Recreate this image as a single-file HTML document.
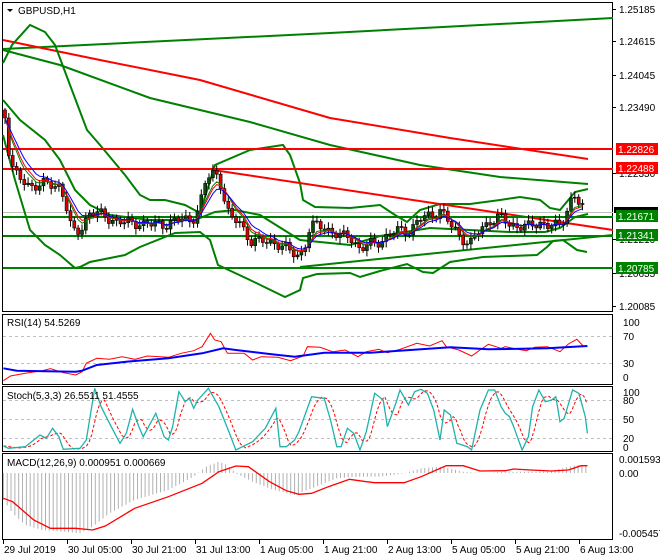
<!DOCTYPE html>
<html><head><meta charset="utf-8"><style>
html,body{margin:0;padding:0;background:#fff;width:660px;height:560px;overflow:hidden}
svg{display:block}
text{font-family:"Liberation Sans",sans-serif;font-size:10px;fill:#000}
</style></head><body>
<svg id="s" width="660" height="560" xmlns="http://www.w3.org/2000/svg"></svg>
<script>
var S=document.getElementById('s'),o='';
function pl(p,c,w,extra){o+='<polyline fill="none" stroke="'+c+'" stroke-width="'+w+'" '+(extra||'')+' points="'+p.map(function(q){return q[0].toFixed(1)+','+q[1].toFixed(1)}).join(' ')+'"/>';}
function ln(x1,y1,x2,y2,c,w,e){o+='<line x1="'+x1+'" y1="'+y1+'" x2="'+x2+'" y2="'+y2+'" stroke="'+c+'" stroke-width="'+w+'" '+(e||'')+'/>';}
function tx(x,y,t,c){o+='<text x="'+x+'" y="'+y+'"'+(c?' style="fill:'+c+'"':'')+'>'+t+'</text>';}
function Z(a){return a.map(function(q){return [q[0]/2.375,q[1]/3+300]});}
function interp(pts,x){for(var i=0;i<pts.length-1;i++){if(x>=pts[i][0]&&x<=pts[i+1][0]){var t=(x-pts[i][0])/(pts[i+1][0]-pts[i][0]);return pts[i][1]+t*(pts[i+1][1]-pts[i][1]);}}return x<pts[0][0]?pts[0][1]:pts[pts.length-1][1];}
o+='<rect x="2.5" y="2.5" width="610" height="309" fill="none" stroke="#000"/>';
o+='<rect x="2.5" y="314.5" width="610" height="70" fill="none" stroke="#000"/>';
o+='<rect x="2.5" y="386.5" width="610" height="65" fill="none" stroke="#000"/>';
o+='<rect x="2.5" y="453.5" width="610" height="86" fill="none" stroke="#000"/>';
ln(3,212.5,613,212.5,'#c0c0c0',1);
pl([[3,49],[330,33],[613,18]],'#008000',2);
pl([[3,40],[100,60],[200,80],[330,118],[450,138],[588,159]],'#ff0000',2);
pl([[3,50],[60,65],[150,98],[250,122],[330,145],[420,165],[500,177],[588,184]],'#008000',2);
pl([[3,63],[12,45],[30,25],[45,32],[55,45],[70,85],[87,130],[100,145],[125,175],[140,195],[150,200],[165,200],[185,205],[200,213],[215,165],[250,150],[283,145],[290,155],[300,183],[303,200],[315,207],[350,208],[380,205],[395,215],[407,222],[420,210],[440,204],[470,204],[500,200],[520,197],[540,200],[550,208],[560,210],[575,192],[588,189]],'#008000',2);
pl([[3,135],[15,180],[30,230],[45,245],[60,255],[75,268],[80,267],[90,262],[110,258],[125,255],[140,247],[175,233],[200,232],[210,240],[218,265],[250,280],[285,297],[300,290],[303,278],[317,274],[350,273],[360,277],[380,271],[407,264],[423,272],[433,273],[450,262],[483,257],[537,255],[547,247],[553,241],[563,240],[577,250],[587,252]],'#008000',2);
pl([[3,100],[20,120],[45,140],[60,160],[75,190],[90,205],[110,215],[150,220],[195,220],[215,212],[235,210],[260,215],[300,240],[350,245],[380,236],[430,228],[470,230],[510,232],[545,232],[560,228],[575,217],[588,214]],'#008000',2);
pl([[213,170],[613,230]],'#ff0000',2);
pl([[300,267],[613,235]],'#008000',2);
ln(3,149,613,149,'#ff0000',2);ln(3,169,613,169,'#ff0000',2);
ln(3,217,613,217,'#008000',2);ln(3,236,613,236,'#008000',2);ln(3,268,613,268,'#008000',2);
var P=[[5,115],[10,160],[15,175],[20,180],[30,185],[40,185],[60,185],[65,200],[70,225],[75,235],[80,230],[85,220],[90,212],[100,215],[110,218],[120,222],[130,224],[140,222],[150,225],[160,225],[170,222],[180,220],[190,220],[195,215],[200,205],[205,185],[210,175],[215,172],[220,180],[225,200],[230,220],[240,222],[250,240],[260,243],[270,240],[280,245],[290,252],[300,255],[305,245],[310,228],[320,225],[330,230],[340,238],[350,235],[360,250],[370,245],[380,240],[390,235],[400,230],[410,230],[420,220],[430,215],[440,210],[450,225],[460,235],[470,245],[480,230],[490,220],[500,218],[510,225],[520,225],[530,228],[540,222],[550,225],[560,228],[565,215],[570,200],[575,195],[580,205],[585,212]];
var cl=[],xs=[],prev=110;
for(var x=5,i=0;x<=586;x+=3.85,i++){var c=interp(P,x)+Math.sin(i*1.7)*4+Math.cos(i*0.9)*3;xs.push(x);cl.push(c);
 var op=prev,hi=Math.min(op,c)-2-Math.abs(Math.sin(i*2.3))*4,lo=Math.max(op,c)+2+Math.abs(Math.cos(i*1.3))*4;
 ln(x.toFixed(1),hi.toFixed(1),x.toFixed(1),lo.toFixed(1),'#000',1);
 var t=Math.min(op,c),h=Math.max(1,Math.abs(op-c));
 o+='<rect x="'+(x-1.5).toFixed(1)+'" y="'+t.toFixed(1)+'" width="3" height="'+h.toFixed(1)+'" fill="'+(c<op?'#0b4d0b':'#e00000')+'" stroke="#000" stroke-width="0.6"/>';
 prev=c;}
function ema(a,n){var k=2/(n+1),r=[],v=a[0];for(var i=0;i<a.length;i++){v=a[i]*k+v*(1-k);r.push([xs[i],v]);}return r;}
pl(ema(cl,5),'#008000',1);pl(ema(cl,6),'#ff0000',1);pl(ema(cl,8),'#0000ff',1);
ln(3,336.5,613,336.5,'#c0c0c0',1,'stroke-dasharray="3,3"');ln(3,363.5,613,363.5,'#c0c0c0',1,'stroke-dasharray="3,3"');
pl(Z([[8,242],[25,228],[60,220],[100,212],[120,206],[150,218],[180,225],[195,215],[205,190],[230,175],[260,178],[290,170],[320,178],[350,168],[400,172],[430,160],[460,152],[480,140],[500,100],[510,120],[525,125],[540,160],[580,160],[600,180],[620,170],[660,172],[690,182],[720,168],[730,140],[760,142],[790,155],[820,150],[850,170],[870,155],[900,148],[920,158],[950,148],[990,130],[1020,138],[1050,122],[1060,140],[1090,150],[1120,168],[1140,150],[1160,133],[1190,145],[1200,140],[1230,148],[1250,152],[1270,142],[1300,140],[1330,155],[1350,132],[1370,118],[1385,138],[1395,140]]),'#ff0000',1);
pl(Z([[8,205],[40,212],[180,215],[195,212],[230,195],[300,185],[400,175],[480,160],[530,145],[560,150],[640,162],[700,170],[770,158],[880,158],[1000,148],[1070,142],[1160,148],[1300,145],[1395,138]]),'#0000ff',2);
tx(7,326,'RSI(14) 54.5269');
[400.5,419.5,438.5].forEach(function(y){ln(3,y,613,y,'#c0c0c0',1,'stroke-dasharray="3,3"');});
var K=[[8,438],[20,445],[60,440],[95,405],[110,415],[125,385],[140,410],[150,448],[190,445],[205,420],[225,265],[240,320],[260,370],[285,430],[300,400],[315,328],[330,380],[340,410],[370,340],[390,410],[400,420],[410,380],[425,275],[440,305],[450,295],[460,325],[470,300],[495,265],[520,320],[545,400],[560,450],[600,425],[630,385],[655,325],[665,440],[680,440],[700,420],[710,395],[740,290],[770,295],[785,360],[800,440],[810,440],[825,385],[840,400],[855,450],[870,395],[890,280],[910,300],[920,380],[940,310],[950,270],[970,315],[985,275],[1000,268],[1015,280],[1030,330],[1045,420],[1055,330],[1070,345],[1085,430],[1110,440],[1120,450],[1140,330],[1160,270],[1175,270],[1190,320],[1200,340],[1210,350],[1220,380],[1240,450],[1255,410],[1265,320],[1280,270],[1295,305],[1310,300],[1320,290],[1330,365],[1340,355],[1360,270],[1375,280],[1390,350],[1395,400]];
var D=[];for(var xx=8;xx<=1395;xx+=6){var v=(interp(K,xx-4)+interp(K,xx-14)+interp(K,xx-24))/3;D.push([xx,v]);}
pl(Z(D),'#ff0000',1,'stroke-dasharray="3,2"');
pl(Z(K),'#20b2aa',1.3);
tx(7,399,'Stoch(5,3,3) 26.5511 51.4555');
var H=[[8,600],[30,640],[60,675],[100,690],[150,695],[190,700],[220,680],[260,640],[320,600],[400,570],[460,530],[490,500],[520,485],[540,495],[560,520],[600,545],[650,570],[700,585],[750,560],[800,535],[850,530],[900,530],[960,520],[1000,505],[1050,500],[1100,515],[1150,520],[1200,515],[1300,515],[1370,495],[1395,495]];
for(var xx=8;xx<=1395;xx+=9.1){var y=interp(H,xx)/3+300;ln((xx/2.375).toFixed(1),473,(xx/2.375).toFixed(1),y.toFixed(1),'#b0b0b0',1);}
pl(Z([[8,595],[30,605],[80,660],[120,685],[180,685],[220,690],[250,678],[320,625],[400,590],[480,550],[520,515],[560,498],[590,500],[640,545],[680,572],[710,583],[740,580],[780,560],[830,538],[870,545],[890,548],[960,548],[1000,530],[1060,497],[1100,497],[1140,513],[1200,512],[1220,507],[1260,510],[1310,513],[1350,510],[1380,497],[1395,497]]),'#ff0000',1.3);
tx(7,466,'MACD(12,26,9) 0.000951 0.000669');
o+='<polygon points="7,9 13,9 10,12" fill="#000"/>';tx(18,14,'GBPUSD,H1');
[[13,'1.25185'],[45,'1.24615'],[79,'1.24045'],[111,'1.23490'],[177,'1.22350'],[243,'1.21210'],[277,'1.20655'],[310,'1.20085']].forEach(function(a){ln(613,a[0]-3.5,616,a[0]-3.5,'#000',1);tx(619,a[0],a[1]);});
o+='<rect x="614" y="207" width="44" height="6" fill="#000"/>';
[[143,'#ff0000','1.22826'],[162,'#ff0000','1.22488'],[210,'#008000','1.21671'],[229,'#008000','1.21341'],[262,'#008000','1.20785']].forEach(function(a){o+='<rect x="616" y="'+a[0]+'" width="42" height="12" fill="'+a[1]+'"/>';tx(618,a[0]+10,a[2],'#fff');});
[[326,'100'],[340,'70'],[367,'30'],[381,'0'],[396,'100'],[404,'80'],[423,'50'],[442,'20'],[451,'0']].forEach(function(a){tx(623,a[0],a[1]);});
tx(619,463,'0.001593');tx(619,477,'0.00');tx(619,537,'-0.005457');
[[3,'29 Jul 2019'],[67,'30 Jul 05:00'],[131,'30 Jul 21:00'],[195,'31 Jul 13:00'],[259,'1 Aug 05:00'],[323,'1 Aug 21:00'],[387,'2 Aug 13:00'],[451,'5 Aug 05:00'],[515,'5 Aug 21:00'],[579,'6 Aug 13:00']].forEach(function(a){ln(a[0]+0.5,540,a[0]+0.5,544,'#000',1);tx(a[0]+1,553,a[1]);});
S.innerHTML=o;
</script>
</body></html>
